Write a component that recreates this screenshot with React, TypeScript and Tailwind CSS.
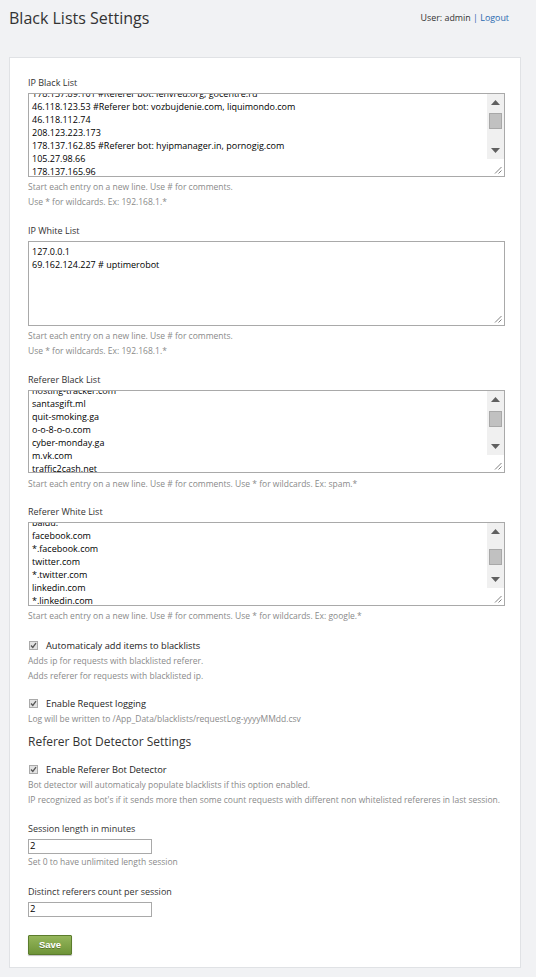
import React from "react";

const font = { fontFamily: '"Open Sans", "Noto Sans", Arial, sans-serif' };

function Scrollbar({ thumbTop }: { thumbTop: number }) {
  return (
    <div className="flex w-[17px] shrink-0 flex-col">
      <div className="flex flex-1 flex-col bg-[#f0f0f0]">
        <div className="flex h-[17px] items-center justify-center">
          <svg width="9" height="5" viewBox="0 0 9 5"><path d="M0 5 L4.5 0 L9 5 Z" fill="#606060" /></svg>
        </div>
        <div className="relative flex-1">
          <div className="absolute left-[2px] right-[2px] h-[16px] border border-[#a8a8a8] bg-[#c1c1c1]" style={{ top: thumbTop }} />
        </div>
        <div className="flex h-[17px] items-center justify-center">
          <svg width="9" height="5" viewBox="0 0 9 5"><path d="M0 0 L9 0 L4.5 5 Z" fill="#606060" /></svg>
        </div>
      </div>
      <div className="flex h-[17px] items-end justify-end bg-white pb-[2px] pr-[2px]">
        <Grip />
      </div>
    </div>
  );
}

function Grip() {
  return (
    <svg width="8" height="8" viewBox="0 0 8 8">
      <path d="M7.5 1 L1 7.5 M7.5 4.5 L4.5 7.5" stroke="#808080" strokeWidth="1" />
    </svg>
  );
}

function ScrollArea({ lines, offset, thumbTop, h = 84 }: { lines: string[]; offset: number; thumbTop: number; h?: number }) {
  return (
    <div className="flex border border-[#a9a9a9] bg-white" style={{ height: h }}>
      <div className="flex-1 overflow-hidden pl-[3px]">
        <div className="text-[9px] leading-[13px] text-black" style={{ marginTop: offset }}>
          {lines.map((l, i) => (
            <div key={i} className="whitespace-pre">{l}</div>
          ))}
        </div>
      </div>
      <Scrollbar thumbTop={thumbTop} />
    </div>
  );
}

function PlainArea({ lines, h = 85 }: { lines: string[]; h?: number }) {
  return (
    <div className="relative flex border border-[#a9a9a9] bg-white" style={{ height: h }}>
      <div className="flex-1 pl-[3px] pt-[3px] text-[9px] leading-[13px] text-black">
        {lines.map((l, i) => (
          <div key={i} className="whitespace-pre">{l}</div>
        ))}
      </div>
      <div className="absolute bottom-[2px] right-[2px]">
        <Grip />
      </div>
    </div>
  );
}

function Label({ children }: { children: React.ReactNode }) {
  return <div className="mb-[3px] text-[9px] leading-[14px] text-[#333]">{children}</div>;
}

function Help({ children }: { children: React.ReactNode }) {
  return <div className="text-[8.5px] leading-[15px] text-[#8a8a8a]">{children}</div>;
}

function Check({ label }: { label: string }) {
  return (
    <div className="flex h-[15px] items-center">
      <span className="ml-[1px] flex h-[9px] w-[9px] items-center justify-center border border-[#aaaaaa] bg-[#e2e2e2]">
        <svg width="7" height="7" viewBox="0 0 7 7">
          <path d="M1 3.5 L2.8 5.5 L6 1.2" stroke="#555" strokeWidth="1.3" fill="none" />
        </svg>
      </span>
      <span className="ml-[8px] text-[9.25px] leading-[15px] text-[#222]">{label}</span>
    </div>
  );
}

export default function App() {
  return (
    <div className="min-h-[977px] bg-[#f1f2f4] pb-[11px] pl-[9px] pr-[15px]" style={font}>
      <div className="flex h-[57px] items-start justify-between">
        <h1 className="mt-[7px] text-[16px] leading-[22px] text-[#333]">Black Lists Settings</h1>
        <div className="mr-[12px] mt-[11px] text-[8.9px] leading-[14px] text-[#333]">
          User: admin <span className="text-[#2a6ab0]">|</span> <span className="text-[#2a6ab0]">Logout</span>
        </div>
      </div>
      <div className="border border-[#e0e2e5] bg-white pb-[12px] pl-[18px] pr-[15px] pt-[18px]">
        <Label>IP Black List</Label>
        <ScrollArea
          offset={-7}
          thumbTop={2}
          lines={[
            "178.137.89.101 #Referer bot: lenvreu.org, gocentre.ru",
            "46.118.123.53 #Referer bot: vozbujdenie.com, liquimondo.com",
            "46.118.112.74",
            "208.123.223.173",
            "178.137.162.85 #Referer bot: hyipmanager.in, pornogig.com",
            "105.27.98.66",
            "178.137.165.96",
          ]}
        />
        <div className="mt-[2px]">
          <Help>Start each entry on a new line. Use # for comments.</Help>
          <Help>Use * for wildcards. Ex: 192.168.1.*</Help>
        </div>

        <div className="mt-[15px]">
          <Label>IP White List</Label>
          <PlainArea lines={["127.0.0.1", "69.162.124.227 # uptimerobot"]} />
          <div className="mt-[2px]">
            <Help>Start each entry on a new line. Use # for comments.</Help>
            <Help>Use * for wildcards. Ex: 192.168.1.*</Help>
          </div>
        </div>

        <div className="mt-[15px]">
          <Label>Referer Black List</Label>
          <ScrollArea
            h={83}
            offset={-7}
            thumbTop={3}
            lines={[
              "hosting-tracker.com",
              "santasgift.ml",
              "quit-smoking.ga",
              "o-o-8-o-o.com",
              "cyber-monday.ga",
              "m.vk.com",
              "traffic2cash.net",
            ]}
          />
          <div className="mt-[3px]">
            <Help>Start each entry on a new line. Use # for comments. Use * for wildcards. Ex: spam.*</Help>
          </div>
        </div>

        <div className="mt-[14px]">
          <Label>Referer White List</Label>
          <ScrollArea
            offset={-7}
            thumbTop={9}
            lines={[
              "baidu.",
              "facebook.com",
              "*.facebook.com",
              "twitter.com",
              "*.twitter.com",
              "linkedin.com",
              "*.linkedin.com",
            ]}
          />
          <div className="mt-[2px]">
            <Help>Start each entry on a new line. Use # for comments. Use * for wildcards. Ex: google.*</Help>
          </div>
        </div>

        <div className="mt-[15px]">
          <Check label="Automaticaly add items to blacklists" />
          <Help>Adds ip for requests with blacklisted referer.</Help>
          <Help>Adds referer for requests with blacklisted ip.</Help>
        </div>

        <div className="mt-[13px]">
          <Check label="Enable Request logging" />
          <Help>Log will be written to /App_Data/blacklists/requestLog-yyyyMMdd.csv</Help>
        </div>

        <h2 className="mt-[7px] text-[12px] leading-[18px] text-[#333]">Referer Bot Detector Settings</h2>

        <div className="mt-[11px]">
          <Check label="Enable Referer Bot Detector" />
          <Help>Bot detector will automaticaly populate blacklists if this option enabled.</Help>
          <Help>IP recognized as bot's if it sends more then some count requests with different non whitelisted refereres in last session.</Help>
        </div>

        <div className="mt-[15px]">
          <Label>Session length in minutes</Label>
          <div className="flex h-[15px] w-[124px] items-center border border-[#a9a9a9] bg-white pl-[1px] text-[9.5px] text-black">2</div>
          <Help>Set 0 to have unlimited length session</Help>
        </div>

        <div className="mt-[16px]">
          <Label>Distinct referers count per session</Label>
          <div className="flex h-[15px] w-[124px] items-center border border-[#a9a9a9] bg-white pl-[1px] text-[9.5px] text-black">2</div>
        </div>

        <button
          className="mt-[18px] flex h-[20px] w-[44px] items-center justify-center rounded-[1px] border border-[#5b7c2c] bg-gradient-to-b from-[#95b65b] to-[#6e9438] text-[9.5px] font-bold text-white shadow-[0_1px_1px_rgba(0,0,0,0.25)]"
          style={{ fontFamily: "Arial, 'Liberation Sans', sans-serif", textShadow: "0 1px 0 rgba(0,0,0,0.3)" }}
        >
          Save
        </button>
      </div>
    </div>
  );
}
